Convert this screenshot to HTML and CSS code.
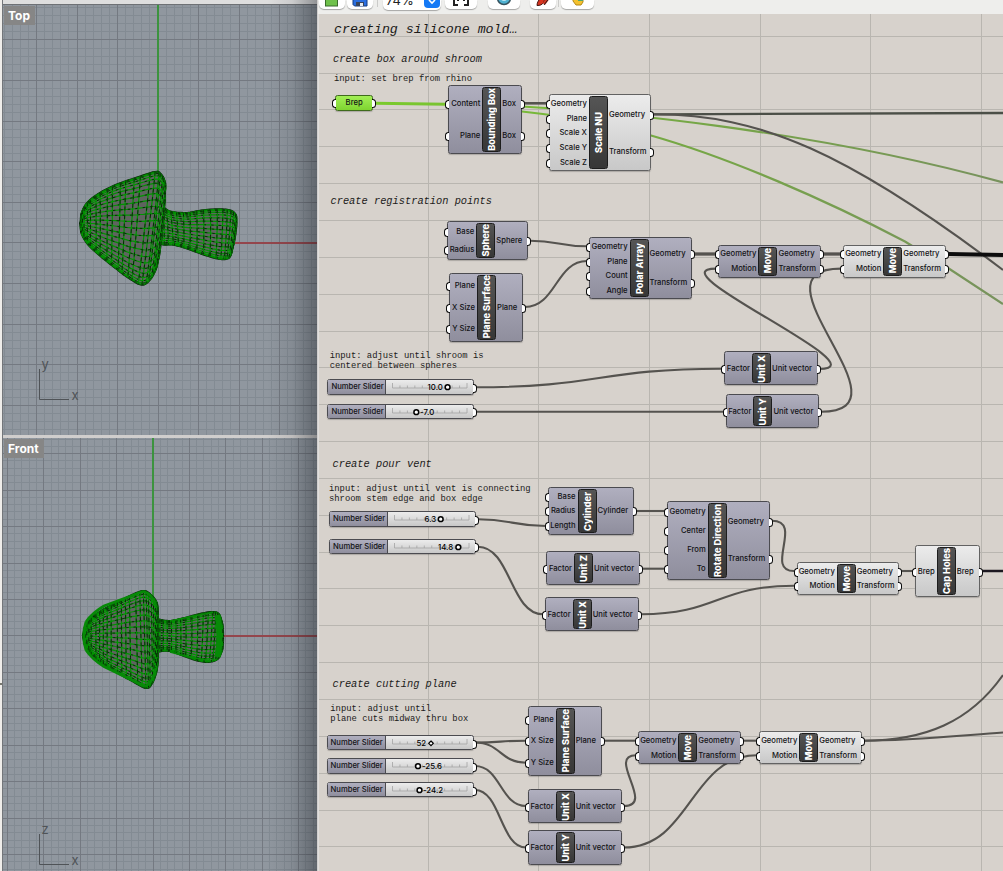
FILE: index.html
```html
<!DOCTYPE html>
<html lang="en">
<head>
<meta charset="utf-8">
<title>Silicone mold definition</title>
<link rel="stylesheet" href="styles.css">
</head>
<body>
<div class="app">
  <section class="rhino">
    <div class="rhino-bar"></div>
    <div class="viewport viewport-top">
      <svg class="scene" id="scene-top" width="314" height="430" viewBox="3 5 314 430"></svg>
      <span class="view-name">Top</span>
    </div>
    <div class="viewport viewport-front">
      <svg class="scene" id="scene-front" width="314" height="433" viewBox="3 438 314 433"></svg>
      <span class="view-name">Front</span>
    </div>
    <i class="window-shadow"></i>
    <i class="edge-mark"></i>
  </section>
  <section class="grasshopper">
    <header class="toolbar">
      <span class="tool" style="width:26px"><svg width="16" height="8"><rect x="1.5" y="-4" width="12" height="10" fill="#6fc14b" stroke="#3a6b2c"/></svg></span>
      <span class="tool" style="width:26px"><svg width="18" height="8"><path d="M2-4V4.500L3.500 6H16V-4Z" fill="#2b6fe0" stroke="#123a80"/><path d="M5 6V2H13V6Z" fill="#39445a"/><rect x="9" y="3" width="3" height="3" fill="#e6ebf2"/></svg></span>
      <i class="tool-sep"></i>
      <span class="tool zoom-box"><span class="zoom-value">74%</span><span class="zoom-arrow"><svg width="10" height="6" viewBox="0 0 10 6"><path d="M2 0 5 3 8 0" fill="none" stroke="#fff" stroke-width="1.600"/></svg></span></span>
      <span class="tool" style="width:32px"><svg width="18" height="8"><path d="M2-2V5H6M16-2V5H12M6 1V-1H12V1" fill="none" stroke="#222" stroke-width="2"/></svg></span>
      <span class="tool tool-eye" style="width:32px"><svg width="18" height="8"><circle cx="9" cy="-2" r="6.500" fill="#4fb2d2" stroke="#35525e" stroke-width="1.500"/><circle cx="9" cy="-2" r="3" fill="#bfe6f2"/></svg></span>
      <span class="tool tool-pen" style="width:26px"><svg width="18" height="8"><path d="M3 5.500C3 2 5 0 7-3H11L10 2C8 5 6 5.500 3 5.500Z" fill="#d8341f" stroke="#451711"/><path d="M10 4 15-3" stroke="#d8341f" stroke-width="3"/><path d="M10 5 16-3" stroke="#222"/></svg></span>
      <i class="tool-sep tool-sep-last"></i>
      <span class="tool" style="width:33px"><svg width="18" height="8"><path d="M4-3H14V2L12 5H7L4 1Z" fill="#f4c22e" stroke="#b48716"/><rect x="9" y="-3" width="5" height="4" fill="#55a56b"/></svg></span>
    </header>
    <div class="canvas" id="canvas">
      <svg class="wires" id="wires" width="685" height="857" viewBox="318 14 685 857"></svg>
    </div>
  </section>
</div>
<script src="graph.js"></script>
</body>
</html>
```
FILE: styles.css
```css
* { box-sizing: border-box; }
body { margin: 0; overflow: hidden; font-family: Inter, "Liberation Sans", sans-serif; }
.app { display: flex; width: 1003px; height: 871px; }

/* Modelling viewports */
.rhino {
  position: relative;
  display: flex;
  flex-direction: column;
  width: 318px;
  height: 871px;
  padding-left: 3px;
  padding-right: 1px;
  background: linear-gradient(90deg, #efedea 0 2px, #73767a 2px 3px, #d0cecd 3px);
}
.rhino-bar { height: 5px; background: #dedede; border-bottom: 1px solid #6e7175; }
.viewport { position: relative; background: #90979f; overflow: hidden; }
.viewport-top { height: 430px; }
.viewport-front { height: 433px; margin-top: 3px; }
.scene { display: block; }
.view-name {
  position: absolute;
  left: 1px;
  top: 1px;
  height: 19px;
  padding: 0 5px 0 4px;
  background: #868686;
  color: #fff;
  font-size: 12px;
  font-weight: 700;
  line-height: 19px;
}
.axis-name { font-size: 13px; fill: #4f5357; }
.window-shadow {
  position: absolute;
  right: 1px;
  top: 0;
  width: 50px;
  height: 871px;
  background: linear-gradient(90deg, rgba(20,24,30,0), rgba(20,24,30,.09) 50%, rgba(20,24,30,.38));
}
.edge-mark { position: absolute; left: 0; top: 683px; width: 2px; height: 2px; background: #77776f; }

/* Toolbar */
.grasshopper { display: flex; flex-direction: column; width: 685px; height: 871px; }
.toolbar { display: flex; height: 14px; background: #eeeeec; overflow: hidden; padding-left: 1px; }
.tool {
  display: flex;
  justify-content: center;
  height: 9px;
  margin-right: 2px;
  background: #fff;
  border-radius: 0 0 5px 5px;
  box-shadow: 0 1px 1px rgba(0,0,0,.3);
}
.tool svg { display: block; }
.tool-sep { width: 1px; height: 7px; margin: 0 5px 0 2px; background: #cbcbc9; }
.tool-sep-last { margin: 0 2px 0 0; }
.zoom-box { width: 58px; height: 10px; justify-content: space-between; padding: 0 1px 0 3px; margin-right: 4px; }
.zoom-value { margin-top: -8px; font-size: 13px; line-height: 16px; color: #222; }
.zoom-arrow { width: 16px; height: 8px; padding-left: 3px; background: #1479f5; border-radius: 0 0 4px 4px; }
.tool-eye { margin-left: 9px; }
.tool-pen { margin-left: 8px; }

/* Definition canvas */
.canvas { position: relative; height: 857px; background: #d7d2cc; overflow: hidden; }
.wires { display: block; }
.note {
  position: absolute;
  margin: 0;
  color: #1c1b1a;
  white-space: pre;
  font-family: "Liberation Mono", monospace;
  font-size: 8.850px;
  line-height: 9.700px;
}
.note-heading { font-size: 10.350px; line-height: 12px; font-style: italic; }
.note-title { font-size: 13.300px; line-height: 16px; font-style: italic; }

.node {
  position: absolute;
  display: flex;
  border: 1px solid #4b4b50;
  border-radius: 2.500px;
  background: linear-gradient(#b0afbf, #8f8e9d);
  box-shadow: 0 1px 1px rgba(0,0,0,.2);
  color: #131316;
  font-size: 7.650px;
  font-weight: 500;
}
.node-light { border-color: #626262; background: linear-gradient(#ececec, #c8c8c8); }
.ports { display: flex; flex-direction: column; padding: 1px 0; }
.ports-in { text-align: right; }
.ports-out { flex: 1; }
.port { position: relative; display: flex; flex: 1; align-items: center; white-space: nowrap; }
.ports-in .port { justify-content: flex-end; padding-right: 2px; }
.ports-out .port { padding-left: 1px; }
.port::before {
  content: "";
  position: absolute;
  top: calc(50% - 3.500px);
  width: 3px;
  height: 7px;
  border: 1.400px solid #0b0b0b;
  background: #fff;
}
.ports-in .port::before { left: -4px; border-right: 0; border-radius: 3.500px 0 0 3.500px; }
.ports-out .port::before { right: -4px; border-left: 0; border-radius: 0 3.500px 3.500px 0; }
.node-name {
  display: flex;
  flex: none;
  align-items: center;
  justify-content: center;
  width: 19px;
  margin: 1px 0;
  border: 1px solid #1d1d1d;
  border-radius: 2.500px;
  background: linear-gradient(#555, #373737);
  color: #fff;
  font-size: 9.200px;
  font-weight: 800;
  white-space: nowrap;
}
.node-name span { writing-mode: vertical-rl; transform: rotate(180deg); }
.node-param { background: linear-gradient(#a2ef55, #7fd431); border-color: #3f6b1c; }
.node-param .ports-out .port { justify-content: center; padding: 0; }
.node-param .ports-in { width: 0; }

.slider { border-color: #4b4b50; }
.slider-name {
  width: 58px;
  padding-left: 3px;
  border-right: 1px solid #4b4b50;
  line-height: 14px;
  white-space: nowrap;
  background: linear-gradient(#b0afbf, #8f8e9d);
}
.slider-track { display: block; }
.slider-value { font-size: 7.800px; }
```
FILE: graph.js
```js
const NS = 'http://www.w3.org/2000/svg';
const CANVAS = { x: 318, y: 14 };

function svgAdd(parent, tag, attrs, text) {
  const el = document.createElementNS(NS, tag);
  for (const key in attrs) el.setAttribute(key, attrs[key]);
  if (text) el.textContent = text;
  parent.appendChild(el);
  return el;
}
function add(parent, cls, text) {
  const el = document.createElement('div');
  el.className = cls;
  if (text) el.textContent = text;
  parent.appendChild(el);
  return el;
}

/* Viewport grids: minor lines, then major lines, snapped to whole pixels */
function grid(svg, b, ox, oy, stepX, stepY) {
  const line = (vertical, p, color) => svgAdd(svg, 'rect', vertical
    ? { x: p, y: b.y, width: 1, height: b.h, fill: color }
    : { x: b.x, y: p, width: b.w, height: 1, fill: color });
  for (const [div, color] of [[5, '#838b93'], [1, '#747981']]) {
    for (let k = -60; k < 60; k++) {
      const x = Math.floor(ox + k * stepX / div);
      const y = Math.floor(oy + k * stepY / div);
      if (x >= b.x && x < b.x + b.w) line(true, x, color);
      if (y >= b.y && y < b.y + b.h) line(false, y, color);
    }
  }
}

/* Catmull-Rom sampling of a point list */
function sample(pts, n) {
  const out = [];
  const last = pts.length - 1;
  for (let i = 0; i <= n; i++) {
    const s = Math.min(i / n * last, last - 1e-6);
    const k = Math.floor(s), t = s - k;
    const p = [pts[Math.max(k - 1, 0)], pts[k], pts[k + 1], pts[Math.min(k + 2, last)]];
    out.push([0, 1].map(a => 0.5 * (2 * p[1][a] + (p[2][a] - p[0][a]) * t
      + (2 * p[0][a] - 5 * p[1][a] + 4 * p[2][a] - p[3][a]) * t * t
      + (3 * p[1][a] - p[0][a] - 3 * p[2][a] + p[3][a]) * t * t * t)));
  }
  return out;
}
const pathOf = pts => 'M' + pts.map(p => p[0].toFixed(1) + ' ' + p[1].toFixed(1)).join('L');

/* A surface of revolution seen from the side, between an upper and a lower profile */
function mesh(svg, upper, lower, cols, rows, rim) {
  const N = 60;
  const top = sample(upper, N), bottom = sample(lower, N);
  const at = (i, v) => {
    const w = (1 - Math.cos(Math.PI * v)) / 2;
    const bulge = Math.sin(Math.PI * v) * rim;
    return [top[i][0] + (bottom[i][0] - top[i][0]) * w + bulge * i / N, top[i][1] + (bottom[i][1] - top[i][1]) * w];
  };
  const right = [];
  for (let j = 0; j <= 20; j++) right.push(at(N, j / 20));
  const outline = pathOf(top.concat(right, bottom.slice().reverse())) + 'Z';
  svgAdd(svg, 'path', { d: outline, fill: '#5f635f', stroke: '#071d07', 'stroke-width': 1.600 });
  const across = [], along = [];
  for (let r = 1; r < rows; r++) {
    const pts = [];
    for (let i = 0; i <= N; i++) pts.push(at(i, r / rows));
    along.push(pathOf(pts));
  }
  for (let c = 1; c < cols; c++) {
    const pts = [];
    for (let j = 0; j <= 20; j++) pts.push(at(Math.round(c / cols * N), j / 20));
    across.push(pathOf(pts));
  }
  for (const [lines, dash] of [[along, '2.500 5'], [across, '4 4.500']]) {
    const d = lines.join('');
    svgAdd(svg, 'path', { d, fill: 'none', stroke: '#009400', 'stroke-width': 1.200 });
    svgAdd(svg, 'path', { d, fill: 'none', stroke: '#0c180c', 'stroke-width': .9, 'stroke-dasharray': dash });
  }
  svgAdd(svg, 'path', { d: outline, fill: 'none', stroke: '#0a6a0a', 'stroke-width': .8, 'stroke-dasharray': '2 1.500' });
}
const px = pts => pts.map(([x, y]) => [x / 3, y / 3]);
function axes(svg, y, name) {
  svgAdd(svg, 'path', { d: `M39.500 ${y - 30}V${y + .5}H69`, fill: 'none', stroke: '#4f5357' });
  svgAdd(svg, 'text', { x: 41.500, y: y - 30, class: 'axis-name' }, name);
  svgAdd(svg, 'text', { x: 71.500, y: y + 1, class: 'axis-name' }, 'x');
}

const topScene = document.getElementById('scene-top');
grid(topScene, { x: 3, y: 5, w: 314, h: 430 }, 158, 242.900, 40.500, 40.600);
svgAdd(topScene, 'rect', { x: 157, y: 5, width: 2, height: 170, fill: '#3c933f' });
svgAdd(topScene, 'rect', { x: 230, y: 242, width: 87, height: 2, fill: '#94464c' });
mesh(topScene,
  px([[482, 640], [488, 622], [512, 634], [560, 638], [610, 630], [660, 627], [692, 631], [708, 644], [709, 665]]),
  px([[482, 720], [488, 734], [520, 735], [560, 746], [610, 764], [655, 777], [680, 777], [692, 767], [699, 738]]), 20, 18, 1);
mesh(topScene,
  px([[241, 670], [245, 637], [263, 606], [300, 578], [350, 553], [405, 534], [465, 515], [484, 523], [496, 548], [495, 580]]),
  px([[241, 670], [244, 700], [263, 733], [300, 768], [345, 804], [385, 834], [425, 855], [450, 840], [468, 808], [476, 775]]), 24, 24, 1);
axes(topScene, 399, 'y');

const frontScene = document.getElementById('scene-front');
grid(frontScene, { x: 3, y: 438, w: 314, h: 433 }, 153, 635.900, 36.400, 36.450);
svgAdd(frontScene, 'rect', { x: 152, y: 438, width: 2, height: 160, fill: '#3c933f' });
svgAdd(frontScene, 'rect', { x: 223, y: 635, width: 94, height: 2, fill: '#94464c' });
const low = pts => px(pts.map(([x, y]) => [x, y + 1710]));
mesh(frontScene,
  low([[460, 140], [478, 148], [510, 152], [550, 144], [600, 131], [640, 125], [658, 133], [667, 160]]),
  low([[460, 255], [478, 245], [510, 244], [550, 258], [595, 273], [630, 276], [655, 266], [667, 240]]), 20, 18, 1);
mesh(frontScene,
  low([[249, 198], [255, 168], [275, 142], [310, 118], [350, 98], [390, 77], [430, 62], [453, 74], [471, 98], [474, 130]]),
  low([[249, 198], [255, 228], [275, 255], [310, 283], [350, 308], [395, 333], [438, 355], [457, 340], [470, 305], [475, 265]]), 27, 24, 0);
svgAdd(frontScene, 'path', { d: 'M86 650Q81.500 636 86 622M86 622Q92 613 104 606L143 591.500M86 650Q92 659 104 666.500L145 686.500M143 591.500Q153 594 156 606M145 686.500Q153 683 156 668', fill: 'none', stroke: '#078a07', 'stroke-width': 2.800 });
svgAdd(frontScene, 'path', { d: 'M217.500 615Q221.500 636 217.500 657', fill: 'none', stroke: '#078a07', 'stroke-width': 6 });
svgAdd(frontScene, 'path', { d: 'M170 621Q193 616 213 612.500M170 652Q190 658 211 661', fill: 'none', stroke: '#078a07', 'stroke-width': 1.500 });
axes(frontScene, 864, 'z');

/* Canvas grid and wires */
const wires = document.getElementById('wires');
for (const x of [428, 538, 649, 760, 870, 981]) svgAdd(wires, 'rect', { x, y: 14, width: 1, height: 857, fill: '#b9b6b0' });
for (let k = 0; k < 23; k++) svgAdd(wires, 'rect', { x: 318, y: Math.floor(36.200 + k * 36.850), width: 685, height: 1, fill: '#b9b6b0' });
svgAdd(wires, 'rect', { x: 318, y: 14, width: 1, height: 857, fill: '#dfdedd' });

const defs = svgAdd(wires, 'defs', {});
const fade = svgAdd(defs, 'linearGradient', { id: 'selected', gradientUnits: 'userSpaceOnUse', x1: 375, y1: 0, x2: 1003, y2: 0 });
svgAdd(fade, 'stop', { offset: 0, 'stop-color': '#7acb2b' });
svgAdd(fade, 'stop', { offset: .45, 'stop-color': '#76a944' });
svgAdd(fade, 'stop', { offset: 1, 'stop-color': '#78925d' });

function wire(d, color = '#55534f', width = 2.100) {
  svgAdd(wires, 'path', { d, fill: 'none', stroke: color, 'stroke-width': width });
}
function link(x1, y1, x2, y2, width, color) {
  const h = (x2 - x1) / 2;
  wire(`M${x1} ${y1}C${x1 + h} ${y1} ${x2 - h} ${y2} ${x2} ${y2}`, color, width);
}
wire('M375 103.300 446 104.300', 'url(#selected)', 3);
wire('M522 106.500C600 111 810 129 1003 182.500', 'url(#selected)', 2.200);
wire('M522 111.500C570 117 610 123 651 135.500C730 158 826 200 905 241.500L948 268L1003 304', 'url(#selected)', 2.200);
wire('M654 114.300 1003 113', '#4b4f47', 2.300);
wire('M654 114.300C760 114 850 154 1003 270');
link(522, 103.300, 547, 103.300, 2.600);
link(530, 240.700, 587, 246.300);
link(525, 307, 587, 261);
link(694, 254, 716, 254, 3.300);
link(823, 254, 841, 254, 3.300);
wire('M948 254 1003 255', '#0c0c0c', 4);
wire('M819 369C885 369 652 268.600 716 268.600');
wire('M821 411.800C918 411.800 743 268.600 841 268.600');
link(476, 387.300, 722, 368.700);
link(476, 411.700, 723, 411.700);
link(478, 519.300, 546, 526);
link(478, 546.700, 543, 614.300);
link(636, 511, 665, 511);
link(642, 568.700, 665, 568.700);
link(641, 614.300, 794, 585.700);
wire('M772 520.700C804 520.700 764 571 794 571');
link(901, 571, 913, 571);
wire('M982 571H1003', '#1c1820', 2.500);
link(475, 742.500, 526, 740.700);
link(475, 742.500, 526, 762.700);
link(475, 766, 526, 806);
link(475, 790, 526, 847.500);
link(604, 740.700, 636, 740.700);
link(742, 740.700, 757, 740.700);
wire('M624 806C656 806 606 755.300 636 755.300');
link(624, 847.500, 757, 755.300);
wire('M863 740.700C925 740.700 970 722 1003 675');
wire('M863 740.700C910 740.700 955 736 1003 732.500');

/* Components: name, x, y, width, height, label offset, inputs, outputs, light */
const nodes = [
  ['Bounding Box', 448.300, 85.300, 73.400, 68.400, 34, ['Content', 'Plane'], ['Box', 'Box']],
  ['Scale NU', 548.700, 94.300, 102.600, 77.200, 40.300, ['Geometry', 'Plane', 'Scale X', 'Scale Y', 'Scale Z'], ['Geometry', 'Transform'], 1],
  ['Sphere', 447, 221.200, 81, 38.500, 29.300, ['Base', 'Radius'], ['Sphere']],
  ['Plane Surface', 449.300, 272.500, 73.400, 69, 27.700, ['Plane', 'X Size', 'Y Size'], ['Plane']],
  ['Polar Array', 589.300, 237.300, 102.600, 62.200, 40.300, ['Geometry', 'Plane', 'Count', 'Angle'], ['Geometry', 'Transform']],
  ['Move', 718.200, 244.600, 102.500, 33, 40.300, ['Geometry', 'Motion'], ['Geometry', 'Transform']],
  ['Move', 843, 244.600, 102.500, 33, 40.300, ['Geometry', 'Motion'], ['Geometry', 'Transform'], 1],
  ['Unit X', 724.300, 351.300, 93.400, 34.200, 27.700, ['Factor'], ['Unit vector']],
  ['Unit Y', 725.700, 394.300, 93.600, 34.200, 27.700, ['Factor'], ['Unit vector']],
  ['Cylinder', 548, 487.200, 86, 47.500, 29.500, ['Base', 'Radius', 'Length'], ['Cylinder']],
  ['Unit Z', 546.400, 551.300, 93.600, 34.200, 27.700, ['Factor'], ['Unit vector']],
  ['Unit X', 545, 597.300, 93.600, 34.200, 27.700, ['Factor'], ['Unit vector']],
  ['Rotate Direction', 667.400, 500.600, 102.600, 79, 40.300, ['Geometry', 'Center', 'From', 'To'], ['Geometry', 'Transform']],
  ['Move', 796.500, 561.800, 102.500, 33, 40.300, ['Geometry', 'Motion'], ['Geometry', 'Transform'], 1],
  ['Cap Holes', 915.400, 545.200, 64.600, 52.300, 21.300, ['Brep'], ['Brep'], 1],
  ['Plane Surface', 528, 706.400, 74, 69.200, 27.700, ['Plane', 'X Size', 'Y Size'], ['Plane']],
  ['Unit X', 528, 789.200, 94, 34.300, 27.700, ['Factor'], ['Unit vector']],
  ['Unit Y', 528, 830.400, 94, 34.300, 27.700, ['Factor'], ['Unit vector']],
  ['Move', 638, 731.300, 102.500, 33, 40.300, ['Geometry', 'Motion'], ['Geometry', 'Transform']],
  ['Move', 759, 731.300, 102.500, 33, 40.300, ['Geometry', 'Motion'], ['Geometry', 'Transform'], 1]
];
const canvas = document.getElementById('canvas');
function place(el, x, y, w, h) {
  el.style.left = x - CANVAS.x + 'px';
  el.style.top = y - CANVAS.y + 'px';
  if (w) { el.style.width = w + 'px'; el.style.height = h + 'px'; }
}
for (const [name, x, y, w, h, offset, inputs, outputs, light] of nodes) {
  const el = add(canvas, 'node' + (light ? ' node-light' : ''));
  place(el, x, y, w, h);
  const ins = add(el, 'ports ports-in');
  ins.style.width = offset - 1 + 'px';
  inputs.forEach(p => add(ins, 'port', p));
  const label = document.createElement('span');
  label.textContent = name;
  add(el, 'node-name').appendChild(label);
  const outs = add(el, 'ports ports-out');
  outputs.forEach(p => add(outs, 'port', p));
}
const brep = add(canvas, 'node node-param');
place(brep, 335.300, 95.300, 37.700, 15.400);
add(add(brep, 'ports ports-in'), 'port');
add(add(brep, 'ports ports-out'), 'port', 'Brep');

/* Sliders: x, y, value, knob centre, text x, integer */
const sliders = [
  [327.400, 379.400, '10.0', 448, 428],
  [327.400, 403.700, '-7.0', 416.700, 420.500],
  [329, 511.300, '6.3', 440.700, 424.500],
  [329, 538.800, '14.8', 458.300, 438],
  [326.500, 735.200, '52', 430.500, 416, 1],
  [326.500, 758.400, '-25.6', 417.500, 421.500],
  [326.500, 782.200, '-24.2', 419, 422.500]
];
for (const [x, y, value, knob, textX, integer] of sliders) {
  const el = add(canvas, 'node node-light slider');
  place(el, x, y, 147, 15.300);
  add(el, 'slider-name', 'Number Slider');
  const outs = add(el, 'ports ports-out');
  const port = add(outs, 'port');
  const s = svgAdd(port, 'svg', { class: 'slider-track', width: 86, height: 12, viewBox: '0 0 86 12' });
  const x0 = x + 60;
  let d = 'M5.500 2V7H80V2';
  for (let k = 1; k < 10; k++) d += `M${5.500 + k * 7.450} 4.500V7`;
  svgAdd(s, 'path', { d, fill: 'none', stroke: '#a3a3a3', 'stroke-width': .8 });
  svgAdd(s, 'text', { x: textX - x0, y: 9, class: 'slider-value' }, value);
  const k = knob - x0;
  if (integer) svgAdd(s, 'path', { d: `M${k} 4L${k + 2.300} 6.300L${k} 8.600L${k - 2.300} 6.300Z`, fill: '#fff', stroke: '#000', 'stroke-width': 1.200 });
  else svgAdd(s, 'circle', { cx: k, cy: 6.200, r: 2.400, fill: '#fff', stroke: '#000', 'stroke-width': 1.500 });
}

/* Scribbles: text, x, y, style */
const notes = [
  ['creating silicone mold\u2026', 334, 21.500, 'note-title'],
  ['create box around shroom', 333, 53, 'note-heading'],
  ['input: set brep from rhino', 334, 75],
  ['create registration points', 330.500, 195, 'note-heading'],
  ['input: adjust until shroom is\ncentered between spheres', 329.700, 352.300],
  ['create pour vent', 332.500, 457.500, 'note-heading'],
  ['input: adjust until vent is connecting\nshroom stem edge and box edge', 329, 485.300],
  ['create cutting plane', 332.500, 678, 'note-heading'],
  ['input: adjust until\nplane cuts midway thru box', 330.300, 705.300]
];
for (const [text, x, y, style] of notes) place(add(canvas, 'note ' + (style || ''), text), x, y);
```
